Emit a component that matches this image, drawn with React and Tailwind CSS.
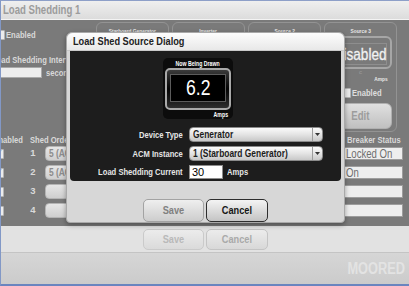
const sources = ["Starboard Generator", "Inverter", "Source 2", "Source 3"];

const shedRows = [
  { n: 1, checked: true, order: "5 (AC Load)", breaker: "Locked On" },
  { n: 2, checked: true, order: "5 (AC Load)", breaker: "On" },
  { n: 3, checked: false, order: "", breaker: "" },
  { n: 4, checked: false, order: "", breaker: "" },
];

// the panel font is a condensed grotesque; squeeze Liberation Sans to match
function Narrow({ children, className = "" }) {
  return (
    <span className={`inline-block whitespace-nowrap scale-x-80 ${className}`}>
      {children}
    </span>
  );
}

function Checkbox({ checked, className = "" }) {
  return (
    <div
      className={`w-[10px] h-[10px] shrink-0 rounded-[1px] bg-[#ececec] border border-[#b5b5b5] flex items-center justify-center ${className}`}
    >
      {checked && (
        <span className="text-[9px] leading-none font-bold text-[#4a4a4a]">✓</span>
      )}
    </div>
  );
}

function SourceCard({ label }) {
  return (
    <div className="w-[73px] h-[110px] shrink-0 rounded-[6px] border border-[#939393] flex flex-col items-center pt-[4px]">
      <Narrow className="origin-center text-[6px] leading-[8px] font-bold text-[#e8e8e8]">
        {label}
      </Narrow>
      <div className="mt-[1px] w-[62px] h-[33px] rounded-[6px] border-2 border-[#a6a6a6] px-[3px] pt-[5px] pb-[2px]">
        <div className="h-full border border-[#8e8e8e] flex items-center justify-center">
          <Narrow className="origin-center text-[17px] leading-none text-[#f2f2f2] [-webkit-text-stroke:0.3px_#f2f2f2]">
            Disabled
          </Narrow>
        </div>
      </div>
      <span className="text-[6px] leading-[7px] text-[#9a9a9a]">c</span>
      <Narrow className="origin-right self-end mr-[8px] text-[6px] leading-[6px] font-bold text-[#e8e8e8]">
        Amps
      </Narrow>
      <div className="self-start ml-[16px] mt-[6px] flex items-center gap-[1px]">
        <Checkbox />
        <Narrow className="origin-left text-[9.5px] font-bold text-[#dedede] leading-none">
          Enabled
        </Narrow>
      </div>
      <button className="mt-[5px] w-[62px] h-[26px] flex items-center justify-center rounded-[6px] border border-[#b0b0b0] bg-gradient-to-b from-[#e0e0e0] to-[#c0c0c0]">
        <Narrow className="origin-center text-[12px] font-bold text-[#9c9c9c]">Edit</Narrow>
      </button>
    </div>
  );
}

function Select({ value }) {
  return (
    <div className="w-[134px] h-[15px] flex rounded-[4px] border border-[#8a8a8a] bg-gradient-to-b from-[#fbfbfb] via-[#e4e4e4] to-[#c8c8c8] overflow-hidden">
      <div className="flex-1 pl-[3px] flex items-center">
        <Narrow className="origin-left text-[10.5px] font-bold text-[#1c1c1c] leading-none">
          {value}
        </Narrow>
      </div>
      <span className="w-[10px] border-l border-[#9c9c9c] flex items-center justify-center">
        <svg width="5" height="3" viewBox="0 0 5 3">
          <path d="M0 0h5L2.5 3z" fill="#333" />
        </svg>
      </span>
    </div>
  );
}

function Meter() {
  return (
    <div className="ml-[93px] mt-[7px] w-[70px] h-[61px] rounded-[5px] bg-[#0c0c0c] flex flex-col items-center pt-[2px]">
      <Narrow className="origin-center text-[6.5px] leading-[7px] font-bold text-white">
        Now Being Drawn
      </Narrow>
      <div className="mt-[1px] w-[66px] h-[42px] rounded-[5px] border-2 border-[#a9a9a9] bg-gradient-to-b from-[#3c3c3c] via-[#050505] to-[#2e2e2e] px-[3px] pt-[4px]">
        <div className="h-[28px] border border-[#5c5c5c] bg-black flex items-center justify-center">
          <Narrow className="origin-center text-[22px] leading-none text-white">6.2</Narrow>
        </div>
      </div>
      <Narrow className="origin-right self-end mr-[5px] mt-[1px] text-[6.5px] leading-[7px] font-bold text-white">
        Amps
      </Narrow>
    </div>
  );
}

function DialogButton({ children, primary }) {
  return (
    <button
      className={
        primary
          ? "w-[62px] h-[23px] flex items-center justify-center rounded-[5px] border border-[#2e2e2e] bg-gradient-to-b from-[#f4f4f4] to-[#c4c4c4] text-[11.5px] font-bold text-[#161616]"
          : "w-[61px] h-[23px] flex items-center justify-center rounded-[5px] border border-[#a3a3a3] bg-gradient-to-b from-[#efefef] to-[#cdcdcd] text-[11.5px] font-bold text-[#808080]"
      }
    >
      <Narrow className="origin-center">{children}</Narrow>
    </button>
  );
}

function FormRow({ label, children }) {
  return (
    <div className="flex items-center">
      <div className="w-[113px] flex justify-end">
        <Narrow className="origin-right leading-none">{label}</Narrow>
      </div>
      <div className="ml-[6px] flex items-center">{children}</div>
    </div>
  );
}

export default function App() {
  return (
    <div className="relative w-[409px] h-[286px] overflow-hidden flex flex-col border-t border-l border-b-2 border-t-[#8d9fc8] border-l-[#8298c6] border-b-[#6a85bf] font-['Liberation_Sans',Arial,sans-serif]">
      {/* title bar */}
      <div className="h-[19px] shrink-0 flex items-center px-[2px] bg-gradient-to-b from-[#efefef] to-[#dcdcdc] border-b border-[#f3f3f3]">
        <Narrow className="origin-left text-[12px] font-bold text-[#9c9c9c]">
          Load Shedding 1
        </Narrow>
      </div>

      {/* main panel */}
      <div className="h-[206px] shrink-0 flex flex-col overflow-hidden bg-[#7a7a7a] text-[#d9d9d9]">
        <div className="h-[115px] shrink-0 flex pt-[2px]">
          <div className="w-[95px] shrink-0 flex flex-col text-[9.5px] font-bold">
            <div className="mt-[8px] flex items-center gap-[1px]">
              <Checkbox className="ml-[-6px]" />
              <Narrow className="origin-left leading-none">Enabled</Narrow>
            </div>
            <div className="mt-[15px] ml-[-9px] h-[10px] flex items-center">
              <Narrow className="origin-left leading-none">Load Shedding Interval</Narrow>
            </div>
            <div className="mt-[2px] flex items-center">
              <div className="ml-[-11px] w-[52px] h-[11px] shrink-0 bg-[#ededed] border border-[#a9a9a9]" />
              <Narrow className="origin-left ml-[4px] leading-none">seconds</Narrow>
            </div>
          </div>
          <div className="flex gap-[3px]">
            {sources.map((s) => (
              <SourceCard key={s} label={s} />
            ))}
          </div>
        </div>

        {/* shed table */}
        <div className="h-[9px] shrink-0 flex items-center text-[9.5px] font-bold leading-none">
          <div className="w-[22px] shrink-0 flex justify-end">
            <Narrow className="origin-right">Enabled</Narrow>
          </div>
          <Narrow className="origin-left ml-[7px]">Shed Order</Narrow>
          <div className="ml-auto mr-[6px] w-[59px] pl-[3px]">
            <Narrow className="origin-left">Breaker Status</Narrow>
          </div>
        </div>
        {shedRows.map((r) => (
          <div key={r.n} className="h-[19px] shrink-0 flex items-center">
            <Checkbox checked={r.checked} className="ml-[-7px]" />
            <span className="ml-[26px] w-[6px] text-center text-[9.5px] font-bold">{r.n}</span>
            <div className="ml-[9px] w-[70px] h-[15px] shrink-0 flex items-center rounded-[4px] bg-gradient-to-b from-[#e6e6e6] to-[#cfcfcf] border border-[#b4b4b4] pl-[3px] overflow-hidden">
              <Narrow className="origin-left text-[10.5px] font-bold leading-none text-[#8c8c8c]">
                {r.order}
              </Narrow>
            </div>
            <div className="ml-auto mr-[6px] w-[59px] h-[13px] shrink-0 flex items-center bg-[#eeeeee] border border-[#9d9d9d] pl-[1px] overflow-hidden">
              <Narrow className="origin-left text-[12px] leading-none text-[#6f6f6f]">
                {r.breaker}
              </Narrow>
            </div>
          </div>
        ))}
      </div>

      {/* dimmed action bar */}
      <div className="h-[27px] shrink-0 flex items-start gap-[2px] pl-[142px] pt-[3px] bg-[#e2e2e2] border-b border-[#c4c4c4]">
        <button className="w-[61px] h-[21px] flex items-center justify-center rounded-[5px] border border-[#cacaca] bg-gradient-to-b from-[#ececec] to-[#dadada] text-[11.5px] font-bold text-[#b9b9b9]">
          <Narrow className="origin-center">Save</Narrow>
        </button>
        <button className="w-[62px] h-[21px] flex items-center justify-center rounded-[5px] border border-[#c4c4c4] bg-gradient-to-b from-[#ececec] to-[#d8d8d8] text-[11.5px] font-bold text-[#a9a9a9]">
          <Narrow className="origin-center">Cancel</Narrow>
        </button>
      </div>

      {/* footer */}
      <div className="flex-1 flex items-center justify-end pr-[4px] bg-gradient-to-b from-[#d6d6d6] to-[#cbcbcb]">
        <Narrow className="origin-right text-[16px] font-bold text-[#e3e3e3]">MOORED</Narrow>
      </div>

      {/* dialog */}
      <div className="absolute left-[65px] top-[31px] w-[279px] h-[191px] flex flex-col rounded-t-[6px] rounded-b-[4px] bg-[#d7d7d7] border border-[#a9a9a9] shadow-[0_2px_5px_rgba(0,0,0,0.35)]">
        <div className="h-[18px] shrink-0 flex items-center pl-[6px] rounded-t-[6px] bg-gradient-to-b from-[#fdfdfd] to-[#e8e8e8] border-b border-[#c9c9c9]">
          <Narrow className="origin-left text-[11.5px] font-bold text-[#222222]">
            Load Shed Source Dialog
          </Narrow>
        </div>
        <div className="mx-[3px] h-[130px] shrink-0 flex flex-col bg-[#1d1d1d] rounded-b-[4px]">
          <Meter />
          <div className="mt-[8px] flex flex-col gap-[4px] text-[9.5px] font-bold text-[#e6e6e6]">
            <FormRow label="Device Type">
              <Select value="Generator" />
            </FormRow>
            <FormRow label="ACM Instance">
              <Select value="1 (Starboard Generator)" />
            </FormRow>
            <FormRow label="Load Shedding Current">
              <div className="w-[34px] h-[14px] flex items-center bg-white border border-[#8d8d8d] pl-[2px]">
                <span className="text-[11px] font-normal leading-none text-black">30</span>
              </div>
              <Narrow className="origin-left ml-[4px] leading-none">Amps</Narrow>
            </FormRow>
          </div>
        </div>
        <div className="mt-[18px] ml-[76px] flex gap-[2px]">
          <DialogButton>Save</DialogButton>
          <DialogButton primary>Cancel</DialogButton>
        </div>
      </div>
    </div>
  );
}
